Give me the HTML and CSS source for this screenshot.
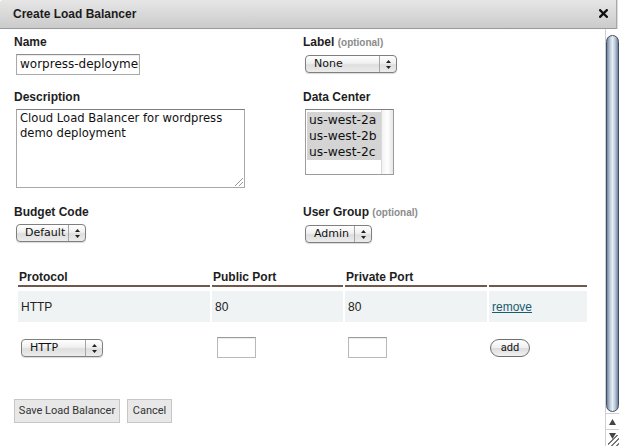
FILE: index.html
```html
<!DOCTYPE html>
<html>
<head>
<meta charset="utf-8">
<title>Create Load Balancer</title>
<link rel="stylesheet" href="styles.css">
</head>
<body>
<div class="dialog">
  <header class="titlebar">
    <h1>Create Load Balancer</h1>
    <span class="close" aria-label="close">
      <svg width="9" height="9" viewBox="0 0 9 9"><path d="M1.2 1.2 L7.8 7.8 M7.8 1.2 L1.2 7.8" stroke="#111" stroke-width="2.3" stroke-linecap="square"/></svg>
    </span>
  </header>
  <div class="main">
    <form class="content">
      <div class="fields">
        <div class="field">
          <label>Name</label>
          <div class="input name-input">worpress-deployment</div>
        </div>
        <div class="field">
          <label>Label <span class="opt">(optional)</span></label>
          <div class="select w-none"><span class="val">None</span><span class="arrows"><svg width="5" height="9" viewBox="0 0 5 9"><path d="M2.5 0 L5 3 L0 3 Z M2.5 9 L5 6 L0 6 Z" fill="#222"/></svg></span></div>
        </div>
        <div class="field">
          <label>Description</label>
          <div class="textarea">Cloud Load Balancer for wordpress demo deployment<span class="grip"></span></div>
        </div>
        <div class="field">
          <label>Data Center</label>
          <div class="listbox">
            <ul class="options">
              <li>us-west-2a</li>
              <li>us-west-2b</li>
              <li>us-west-2c</li>
            </ul>
            <span class="lb-track"></span>
          </div>
        </div>
        <div class="field">
          <label>Budget Code</label>
          <div class="select w-default"><span class="val">Default</span><span class="arrows"><svg width="5" height="9" viewBox="0 0 5 9"><path d="M2.5 0 L5 3 L0 3 Z M2.5 9 L5 6 L0 6 Z" fill="#222"/></svg></span></div>
        </div>
        <div class="field">
          <label>User Group <span class="opt">(optional)</span></label>
          <div class="select w-admin"><span class="val">Admin</span><span class="arrows"><svg width="5" height="9" viewBox="0 0 5 9"><path d="M2.5 0 L5 3 L0 3 Z M2.5 9 L5 6 L0 6 Z" fill="#222"/></svg></span></div>
        </div>
      </div>

      <table class="ports">
        <thead>
          <tr>
            <th class="c1">Protocol</th>
            <th class="c2">Public Port</th>
            <th class="c3">Private Port</th>
            <th class="c4"></th>
          </tr>
        </thead>
        <tbody>
          <tr class="data">
            <td>HTTP</td>
            <td>80</td>
            <td>80</td>
            <td><a href="#" class="remove">remove</a></td>
          </tr>
          <tr class="new">
            <td><div class="select w-http"><span class="val">HTTP</span><span class="arrows"><svg width="5" height="9" viewBox="0 0 5 9"><path d="M2.5 0 L5 3 L0 3 Z M2.5 9 L5 6 L0 6 Z" fill="#222"/></svg></span></div></td>
            <td><div class="input port-input pi1"></div></td>
            <td><div class="input port-input pi2"></div></td>
            <td><span class="pill">add</span></td>
          </tr>
        </tbody>
      </table>

      <div class="actions">
        <span class="btn btn-save">Save Load Balancer</span>
        <span class="btn btn-cancel">Cancel</span>
      </div>
    </form>
    <div class="vscroll">
      <div class="thumb"></div>
      <div class="arrow up"><svg width="7" height="6" viewBox="0 0 7 6"><path d="M3.5 0 L7 6 L0 6 Z" fill="#444"/></svg></div>
      <div class="arrow down"><svg width="7" height="6" viewBox="0 0 7 6"><path d="M3.5 6 L7 0 L0 0 Z" fill="#444"/></svg><span class="rgrip"></span></div>
    </div>
  </div>
</div>
</body>
</html>
```

FILE: styles.css
```css
html, body {
  margin: 0;
  padding: 0;
  background: #fff;
}
body {
  font-family: "Liberation Sans", Arial, sans-serif;
  font-size: 12px;
  color: #222;
}
.dialog {
  width: 619px;
  height: 446px;
  display: flex;
  flex-direction: column;
  overflow: hidden;
}
.titlebar {
  flex: none;
  height: 28px;
  margin-right: 2px;
  padding: 0 8px 0 13px;
  display: flex;
  align-items: center;
  justify-content: space-between;
  background: linear-gradient(#e6e6e6, #cbcbcb);
  border-bottom: 1px solid #9a9a9a;
  border-right: 1px solid #a8a8a8;
  border-top-left-radius: 3px;
  box-shadow: 1px 0 1px rgba(0,0,0,0.15);
}
.titlebar h1 {
  margin: 0;
  font-size: 12px;
  font-weight: bold;
  color: #1c1c1c;
}
.close {
  display: flex;
  width: 9px;
  height: 9px;
  margin-top: -1px;
}
.main {
  flex: 1;
  min-height: 0;
  display: flex;
}
.content {
  flex: 1;
  margin: 0;
  padding: 6px 0 0 14px;
}
.fields {
  display: grid;
  grid-template-columns: 289px 1fr;
  row-gap: 15px;
}
label {
  display: block;
  font-weight: bold;
  line-height: 14px;
  margin-bottom: 5px;
  color: #1e1e1e;
}
.opt {
  font-size: 10px;
  color: #8c8c8c;
}
.input {
  box-sizing: border-box;
  border: 1px solid #a9a9a9;
  border-top-color: #8d8d8d;
  background: #fff;
  box-shadow: inset 0 1px 1px rgba(0,0,0,0.08);
  font-family: "DejaVu Sans", sans-serif;
  color: #111;
  overflow: hidden;
  white-space: nowrap;
}
.name-input {
  margin-left: 2px;
  width: 124px;
  height: 21px;
  padding: 1px 0 0 3px;
  font-size: 12px;
  line-height: 17px;
}
.textarea {
  position: relative;
  box-sizing: border-box;
  margin-left: 2px;
  margin-bottom: 2px;
  width: 229px;
  height: 79px;
  padding: 1px 3px;
  border: 1px solid #8e8e8e;
  border-color: #7e7e7e #a8a8a8 #a8a8a8 #a8a8a8;
  font-family: "DejaVu Sans", sans-serif;
  font-size: 11.6px;
  line-height: 15px;
  color: #111;
}
.grip {
  position: absolute;
  right: 1px;
  bottom: 1px;
  width: 8px;
  height: 8px;
  background: linear-gradient(135deg, transparent 45%, #999 45%, #999 52%, transparent 52%, transparent 70%, #999 70%, #999 77%, transparent 77%);
}
.listbox {
  margin-left: 2px;
  box-sizing: border-box;
  width: 89px;
  height: 66px;
  border: 1px solid #9c9c9c;
  border-top-color: #808080;
  display: flex;
  background: #fff;
}
.options {
  list-style: none;
  margin: 0;
  padding: 2px 0 0 1px;
  flex: 1;
}
.options li {
  background: #d4d4d4;
  height: 16px;
  line-height: 16px;
  padding-left: 2px;
  font-family: "DejaVu Sans", sans-serif;
  font-size: 12.3px;
  color: #111;
}
.lb-track {
  width: 11px;
  flex: none;
  border-left: 1px solid #dadada;
  background: linear-gradient(to right, #f2f2f2, #ffffff 50%, #e6e6e6);
}
.select {
  margin-left: 2px;
  box-sizing: border-box;
  height: 18px;
  display: flex;
  border: 1px solid #7f7f7f;
  border-radius: 4px;
  background: linear-gradient(#ffffff, #f0f0f0 45%, #dedede 55%, #ececec);
  box-shadow: 0 1px 1px rgba(0,0,0,0.15);
  font-family: "DejaVu Sans", sans-serif;
  font-size: 11px;
  color: #111;
}
.select .val {
  flex: 1;
  padding-left: 8px;
  line-height: 16px;
  white-space: nowrap;
}
.select .arrows {
  width: 16px;
  flex: none;
  border-left: 1px solid #a6a6a6;
  display: flex;
  align-items: center;
  justify-content: center;
}
.w-none { width: 92px; margin-top: 1px; }
.w-default { width: 70px; }
.w-admin { width: 67px; }
.w-http { width: 82px; margin-left: 3px; margin-top: 2px; }

.ports {
  margin: 23px 0 0 2px;
  width: 573px;
  table-layout: fixed;
  border-collapse: separate;
  border-spacing: 2px 4px;
}
.ports th {
  box-sizing: border-box;
  text-align: left;
  font-weight: bold;
  line-height: 14px;
  padding: 0 1px 1px;
  border-bottom: 2px solid #6d5a4c;
  color: #1e1e1e;
}
.ports .c1 { width: 192px; }
.ports .c2 { width: 131px; }
.ports .c3 { width: 142px; }
.ports .c4 { width: 98px; }
.ports .data td {
  background: #eff3f4;
  height: 31px;
  padding: 0 3px;
  box-sizing: border-box;
  line-height: 14px;
  vertical-align: middle;
}
.remove {
  color: #1b5c6c;
  text-decoration: underline;
}
.ports .new td {
  padding: 11px 0 0 0;
  vertical-align: top;
}
.port-input {
  width: 39px;
  height: 21px;
  border-color: #b9b9b9;
  border-top-color: #9a9a9a;
}
.pi1 { margin-left: 5px; }
.pi2 { margin-left: 3px; }
.pill {
  display: inline-block;
  box-sizing: border-box;
  margin: 2px 0 0 1px;
  width: 40px;
  height: 18px;
  border: 1px solid #6f6f6f;
  border-radius: 9px;
  background: linear-gradient(#ffffff, #efefef 50%, #dcdcdc 52%, #f2f2f2);
  text-align: center;
  line-height: 16px;
  font-family: Roboto, "DejaVu Sans", sans-serif;
  font-size: 11px;
  color: #111;
}
.actions {
  margin-top: 37px;
  display: flex;
  gap: 7px;
}
.btn {
  box-sizing: border-box;
  height: 24px;
  border: 1px solid #c6c6c6;
  background: #e8e8e8;
  line-height: 22px;
  text-align: center;
  font-family: Roboto, "DejaVu Sans", sans-serif;
  font-size: 11px;
  color: #333;
  white-space: nowrap;
}
.btn-save { width: 106px; }
.btn-cancel { width: 45px; }
.vscroll {
  width: 14px;
  flex: none;
  box-sizing: border-box;
  border-left: 1px solid #cfcfcf;
  display: flex;
  flex-direction: column;
  padding-top: 6px;
  background: #fff;
}
.thumb {
  flex: 1;
  margin: 0 0 1px 0;
  border: 1px solid #3f4f66;
  border-radius: 7px;
  background: linear-gradient(to right, #6d8099, #b7c6d6 25%, #e8eef4 50%, #b7c6d6 75%, #6d8099);
}
.arrow {
  flex: none;
  height: 15px;
  display: flex;
  align-items: center;
  justify-content: center;
  border-top: 1px solid #d0d0d0;
}
.arrow.down {
  height: 17px;
  position: relative;
  align-items: flex-start;
  padding-top: 3px;
  box-sizing: border-box;
}
.rgrip {
  position: absolute;
  right: 0;
  bottom: 0;
  width: 11px;
  height: 11px;
  background: linear-gradient(135deg, transparent 40%, #777 40%, #777 48%, transparent 48%, transparent 62%, #777 62%, #777 70%, transparent 70%, transparent 84%, #777 84%, #777 92%, transparent 92%);
}
```
